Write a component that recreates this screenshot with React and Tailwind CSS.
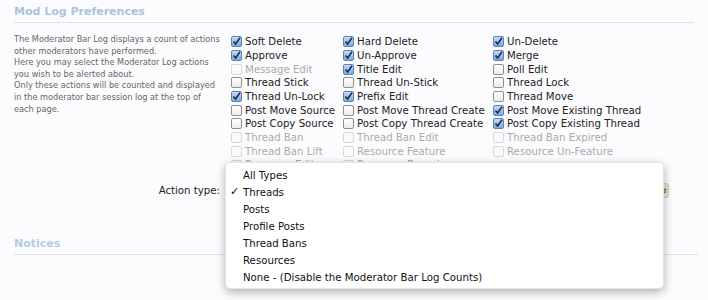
import React from 'react';

const COLS = [
  {
    width: 'w-[112px]',
    items: [
      ['Soft Delete', 'on'],
      ['Approve', 'on'],
      ['Message Edit', 'off'],
      ['Thread Stick', ''],
      ['Thread Un-Lock', 'on'],
      ['Post Move Source', ''],
      ['Post Copy Source', ''],
      ['Thread Ban', 'off'],
      ['Thread Ban Lift', 'off'],
      ['Resource Edit', 'off'],
    ],
  },
  {
    width: 'w-[150px]',
    items: [
      ['Hard Delete', 'on'],
      ['Un-Approve', 'on'],
      ['Title Edit', 'on'],
      ['Thread Un-Stick', ''],
      ['Prefix Edit', 'on'],
      ['Post Move Thread Create', ''],
      ['Post Copy Thread Create', ''],
      ['Thread Ban Edit', 'off'],
      ['Resource Feature', 'off'],
      ['Resource Reassign', 'off'],
    ],
  },
  {
    width: 'flex-1',
    items: [
      ['Un-Delete', 'on'],
      ['Merge', 'on'],
      ['Poll Edit', ''],
      ['Thread Lock', ''],
      ['Thread Move', ''],
      ['Post Move Existing Thread', 'on'],
      ['Post Copy Existing Thread', 'on'],
      ['Thread Ban Expired', 'off'],
      ['Resource Un-Feature', 'off'],
    ],
  },
];

const TYPES = ['All Types', 'Threads', 'Posts', 'Profile Posts', 'Thread Bans', 'Resources', 'None - (Disable the Moderator Bar Log Counts)'];

function Box({ state }) {
  if (state === 'on') {
    return (
      <span className="w-[11px] h-[11px] rounded-[2px] border border-[#5a84b8] bg-gradient-to-b from-[#c4dcf5] to-[#7aa9dd] flex items-center justify-center shrink-0">
        <svg width="9" height="9" viewBox="0 0 9 9">
          <path d="M1.5 4.5 L3.6 7 L8 0.8" fill="none" stroke="#1d2d44" strokeWidth="1.6" />
        </svg>
      </span>
    );
  }
  return (
    <span
      className={`w-[11px] h-[11px] rounded-[2px] border shrink-0 ${
        state === 'off' ? 'border-[#d8d8d8] bg-[#fafafa]' : 'border-[#8e8e8e] bg-gradient-to-b from-white to-[#ececec]'
      }`}
    />
  );
}

export default function App() {
  return (
    <div className="w-[708px] h-[300px] overflow-hidden bg-[#fcfcff] px-[14px] pt-[3px] text-[#222]" style={{ fontFamily: '"DejaVu Sans", Verdana, sans-serif' }}>
      <h2 className="text-[11px] font-bold text-[#a9c4df] leading-[18px] pb-[1px] border-b border-[#d6e4ee]">Mod Log Preferences</h2>

      <div className="flex mt-[10px]">
        <div className="w-[209px] mr-[8px] text-[8.2px] leading-[11.6px] text-[#666] pt-[1px]">
          The Moderator Bar Log displays a count of actions other moderators have performed.
          <br />
          Here you may select the Moderator Log actions you wish to be alerted about.
          <br />
          Only these actions will be counted and displayed in the moderator bar session log at the top of each page.
        </div>
        <div className="flex pt-[2px]">
          {COLS.map((col, i) => (
            <div key={i} className={col.width}>
              {col.items.map(([label, state]) => (
                <div key={label} className="flex items-center gap-[3px] h-[13.7px] text-[10.2px]">
                  <Box state={state} />
                  <span className={state === 'off' ? 'text-[#aaa]' : 'text-[#222]'}>{label}</span>
                </div>
              ))}
            </div>
          ))}
        </div>
      </div>

      <div className="relative flex items-center mt-[10px] h-[18px]">
        <div className="w-[206px] text-right text-[10.2px]">Action type:</div>
        <div className="ml-[5px] flex-1 h-[16px] flex justify-end pr-[25px]">
          <div className="w-[8px] h-[15px] rounded-[3px] bg-[#e5e9c8] border border-[#c9cfa5] flex items-center justify-center text-[6px] text-[#333]">⇕</div>
        </div>
        {/* open select menu */}
        <div className="absolute left-[211px] right-[30px] top-[-20px] h-[127px] bg-white rounded-[5px] shadow-[0_3px_10px_rgba(0,0,0,0.3)] border border-[#e4e4e4] pt-[4px] z-10">
          {TYPES.map((t) => (
            <div key={t} className="flex items-center h-[17px] text-[10.2px] text-[#111]">
              <span className="w-[17px] pl-[4px] text-[11px] font-bold">{t === 'Threads' ? '✓' : ''}</span>
              <span>{t}</span>
            </div>
          ))}
        </div>
      </div>

      <h2 className="mt-[35px] text-[11px] font-bold text-[#b3cbe3] leading-[18px] pb-[1px] border-b border-[#d6e4ee] mr-[-4px]">Notices</h2>
    </div>
  );
}
